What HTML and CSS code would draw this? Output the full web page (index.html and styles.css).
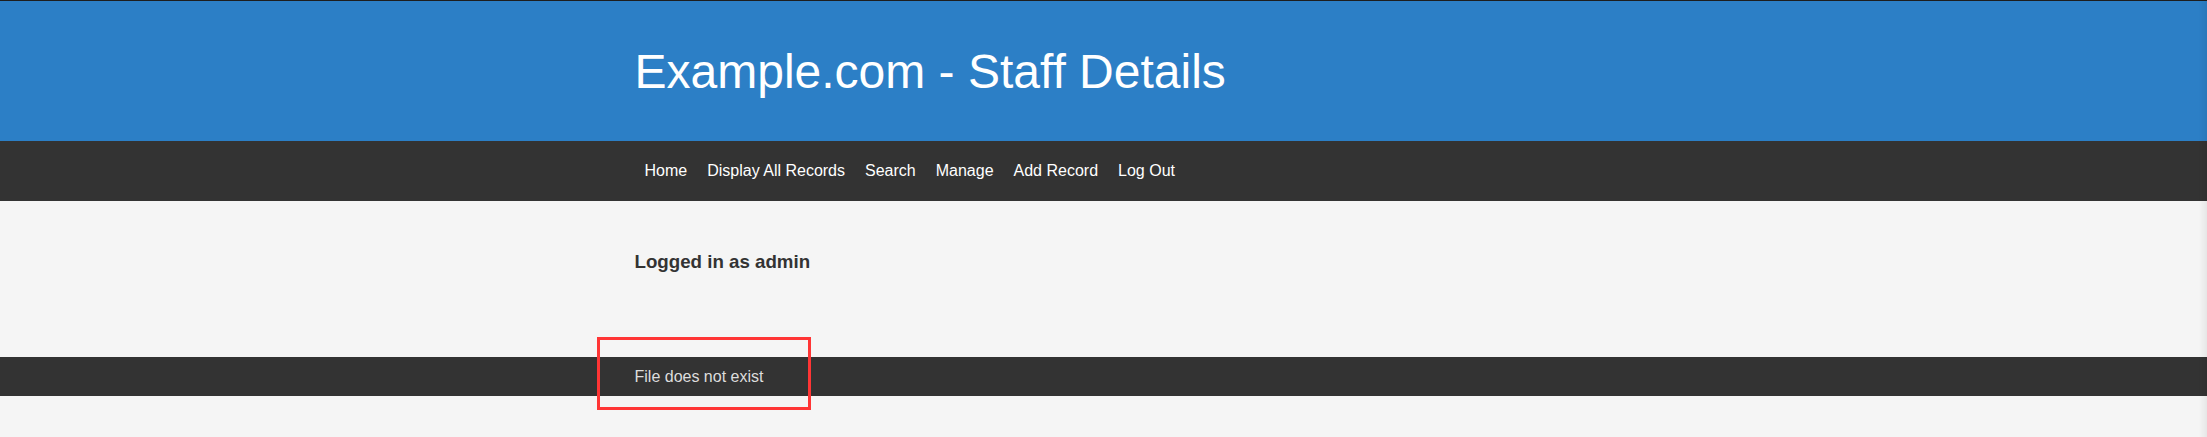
FILE: index.html
```html
<!DOCTYPE html>
<html lang="en">
<head>
  <meta charset="UTF-8">
  <meta name="viewport" content="width=device-width, initial-scale=1.0">
  <title>Example.com - Staff Details</title>

  <link rel="stylesheet" href="styles.css">

</head>
<body>
  <header class="site-header">
    <div class="container">
      <h1 class="site-title">Example.com - Staff Details</h1>
    </div>
  </header>

  <nav class="site-nav">
    <div class="container">
      <a href="#">Home</a>
      <a href="#">Display All Records</a>
      <a href="#">Search</a>
      <a href="#">Manage</a>
      <a href="#">Add Record</a>
      <a href="#">Log Out</a>
    </div>
  </nav>

  <main class="content">
    <div class="container">
      <h3 class="user-status">Logged in as admin</h3>
    </div>
  </main>

  <div class="message-bar">
    <div class="container">
      <p class="message">File does not exist</p>
      <div class="highlight"></div>
    </div>
  </div>

  <div class="edge-shadow"></div>
</body>
</html>
```

FILE: styles.css
```css
html {
    min-height: 100%;
    background-color: #f5f5f5;
}

body {
    font-family: "Liberation Sans", Arial, sans-serif;
    margin: 0;
    min-height: 437px;
    background-color: #f5f5f5;
    color: #333;
}

.container {
    width: 938px;
    margin: 0 auto;
}

.site-header {
    background-color: #2c7fc6;
    border-top: 1px solid #1e1e1e;
    height: 140px;
    display: flex;
    align-items: center;
}

.site-title {
    margin: 0;
    font-size: 48px;
    font-weight: normal;
    color: #fff;
}

.site-nav {
    background-color: #333;
    height: 60px;
    display: flex;
    align-items: center;
}

.site-nav .container {
    display: flex;
}

.site-nav a {
    padding: 0 10px;
    font-size: 16px;
    color: #fff;
    text-decoration: none;
}

.content {
    padding: 50px 0 84px;
}

.user-status {
    margin: 0;
    font-size: 18.72px;
    font-weight: bold;
    color: #333;
}

.message-bar {
    background-color: #333;
    padding: 10px 0;
}

.message-bar .container {
    position: relative;
}

.message {
    margin: 0;
    font-size: 16px;
    line-height: 19px;
    color: #ddd;
}

.highlight {
    position: absolute;
    left: -38px;
    top: -30px;
    width: 214px;
    height: 73px;
    box-sizing: border-box;
    border: 3px solid #ff3535;
    z-index: 2;
}

.edge-shadow {
    position: fixed;
    top: 0;
    right: 0;
    width: 8px;
    height: 100%;
    background: linear-gradient(to right, rgba(0, 0, 0, 0), rgba(0, 0, 0, 0.06));
}
```
